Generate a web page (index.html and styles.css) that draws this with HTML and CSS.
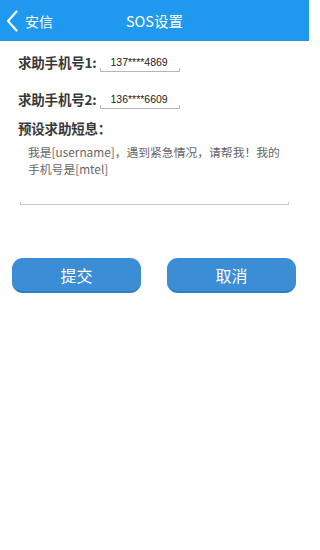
FILE: index.html
```html
<!DOCTYPE html>
<html lang="zh">
<head>
<meta charset="utf-8">
<link rel="stylesheet" href="styles.css">
</head>
<body>
<header class="bar">
  <div class="back">
    <svg class="chev" width="12" height="22" viewBox="0 0 12 22"><path d="M10.5 1.5 L2 11 L10.5 20.5" fill="none" stroke="#fff" stroke-width="2.2" stroke-linecap="round" stroke-linejoin="round"/></svg>
    <span>安信</span>
  </div>
  <div class="title">SOS设置</div>
  <div></div>
</header>
<main class="content">
  <div class="row">
    <span class="label">求助手机号1:</span>
    <span class="field">137****4869</span>
  </div>
  <div class="row row2">
    <span class="label">求助手机号2:</span>
    <span class="field">136****6609</span>
  </div>
  <div class="label msg-label">预设求助短息：</div>
  <div class="area">我是[username]，遇到紧急情况，请帮我！我的<br>手机号是[mtel]</div>
  <div class="buttons">
    <button class="btn">提交</button>
    <button class="btn">取消</button>
  </div>
</main>
</body>
</html>
```
FILE: styles.css
```css
* { box-sizing: border-box; }
body {
  margin: 0;
  width: 309px;
  height: 550px;
  background: #fff;
  font-family: "Noto Sans CJK SC", "Noto Sans", "Liberation Sans", sans-serif;
  color: #333;
}
.bar {
  height: 41px;
  background: #1f98f0;
  display: grid;
  grid-template-columns: 1fr auto 1fr;
  align-items: center;
  color: #fff;
}
.back {
  display: flex;
  align-items: center;
  padding-left: 6px;
  font-size: 14px;
}
.chev { margin-right: 7px; display: block; }
.title { font-size: 14.5px; }
.row {
  display: flex;
  align-items: center;
  height: 30px;
  margin-top: 6px;
  padding-left: 18px;
}
.row2 { margin-top: 7px; }
.label {
  font-size: 13.5px;
  font-weight: bold;
  color: #383838;
  line-height: 20px;
  letter-spacing: -0.2px;
}
.field {
  margin-left: 4px;
  width: 80px;
  height: 17px;
  padding-left: 10px;
  font-size: 10.5px;
  line-height: 15px;
  color: #222;
  font-family: "Liberation Sans", "Noto Sans", sans-serif;
  background:
    linear-gradient(#b5b5b5, #b5b5b5) left bottom / 100% 1px no-repeat,
    linear-gradient(#b5b5b5, #b5b5b5) left bottom / 1px 4px no-repeat,
    linear-gradient(#b5b5b5, #b5b5b5) right bottom / 1px 4px no-repeat;
  margin-top: 2px;
}
.msg-label {
  margin-top: 4px;
  padding-left: 18px;
}
.area {
  margin: 3px 20px 0 20px;
  height: 64px;
  padding: 2px 0 0 8px;
  font-size: 11.8px;
  line-height: 17px;
  color: #666;
  white-space: nowrap;
  background:
    linear-gradient(#c8c8c8, #c8c8c8) left bottom / 100% 1px no-repeat,
    linear-gradient(#c8c8c8, #c8c8c8) left bottom / 1px 3px no-repeat,
    linear-gradient(#c8c8c8, #c8c8c8) right bottom / 1px 3px no-repeat;
}
.buttons {
  display: flex;
  gap: 26px;
  padding: 0 13px 0 12px;
  margin-top: 53px;
}
.btn {
  flex: 1;
  height: 35px;
  border: none;
  border-radius: 11px;
  background: #3b8dd6;
  border-bottom: 2px solid #2f7ec4;
  color: #fff;
  font-size: 16px;
  font-family: "Noto Sans CJK SC", "Noto Sans", sans-serif;
  padding: 0;
  box-shadow: 0 0 1px rgba(0,0,0,0.15);
}
```
